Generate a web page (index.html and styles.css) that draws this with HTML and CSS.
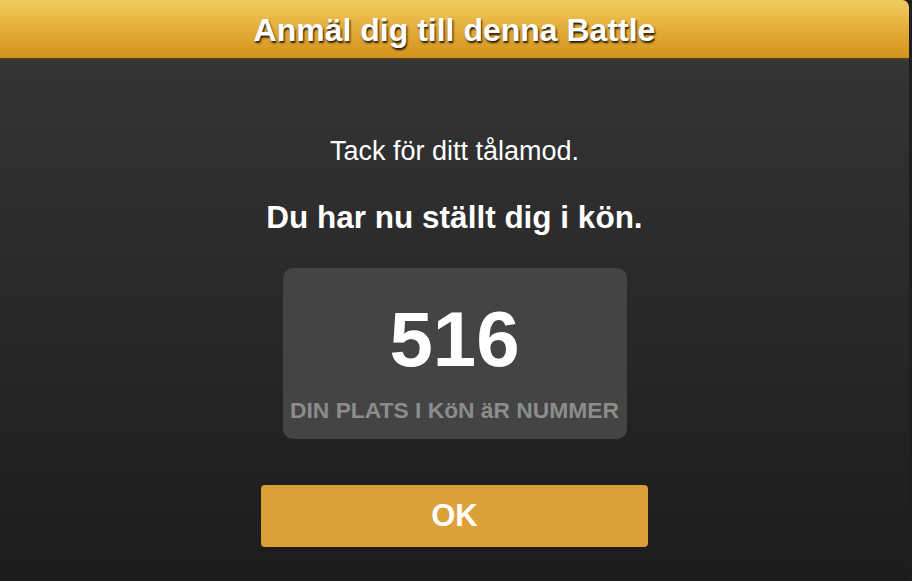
FILE: index.html
```html
<!DOCTYPE html>
<html lang="sv">
<head>
    <meta charset="UTF-8">
    <meta name="viewport" content="width=device-width, initial-scale=1.0">
    <title>Anmäl dig till denna Battle</title>
    <link rel="stylesheet" href="styles.css">
</head>
<body>
    <div class="dialog">
        <div class="dialog-header">
            <h1>Anmäl dig till denna Battle</h1>
        </div>
        <div class="dialog-body">
            <p class="thanks">Tack för ditt tålamod.</p>
            <p class="queued">Du har nu ställt dig i kön.</p>
            <div class="queue-box">
                <div class="queue-number">516</div>
                <div class="queue-label">DIN PLATS I KöN äR NUMMER</div>
            </div>
            <button class="ok-btn">OK</button>
        </div>
    </div>
</body>
</html>
```

FILE: styles.css
```css
html, body {
    height: 100%;
}
body {
    margin: 0;
    background-color: #1e1e1e;
    font-family: "Liberation Sans", Arial, sans-serif;
    color: white;
    overflow: hidden;
}
.dialog {
    width: 909px;
    height: 100%;
    display: flex;
    flex-direction: column;
    border-radius: 0 7px 0 0;
    overflow: hidden;
}
.dialog-header {
    height: 58px;
    flex-shrink: 0;
    background: linear-gradient(to bottom, #f0cc60 0%, #e4ad3a 50%, #d3921a 100%);
    border-bottom: 2px solid #4d3e22;
    display: flex;
    align-items: center;
    justify-content: center;
}
.dialog-header h1 {
    margin: 0;
    font-size: 32px;
    line-height: 36px;
    font-weight: bold;
    text-shadow: 1px 2px 2px rgba(0, 0, 0, 0.85);
    padding-top: 2px;
}
.dialog-body {
    flex: 1;
    background: linear-gradient(to bottom, #343434 0%, #1c1c1c 100%);
    display: flex;
    flex-direction: column;
    align-items: center;
    padding-top: 76px;
}
.thanks {
    margin: 0;
    font-size: 27px;
    line-height: 30px;
}
.queued {
    margin: 34px 0 0;
    font-size: 31.5px;
    line-height: 34px;
    font-weight: bold;
}
.queue-box {
    margin-top: 34px;
    width: 344px;
    height: 171px;
    box-sizing: border-box;
    background-color: #444444;
    border-radius: 10px;
    padding-top: 32px;
    text-align: center;
}
.queue-number {
    font-size: 78px;
    line-height: 78px;
    font-weight: bold;
}
.queue-label {
    margin-top: 19px;
    font-size: 22.8px;
    line-height: 26px;
    font-weight: bold;
    color: #8c8c8c;
}
.ok-btn {
    margin-top: 46px;
    width: 387px;
    height: 62px;
    border: none;
    border-radius: 4px;
    background-color: #dd9f37;
    color: white;
    font-family: "Liberation Sans", Arial, sans-serif;
    font-size: 31px;
    font-weight: bold;
    cursor: pointer;
}
```
